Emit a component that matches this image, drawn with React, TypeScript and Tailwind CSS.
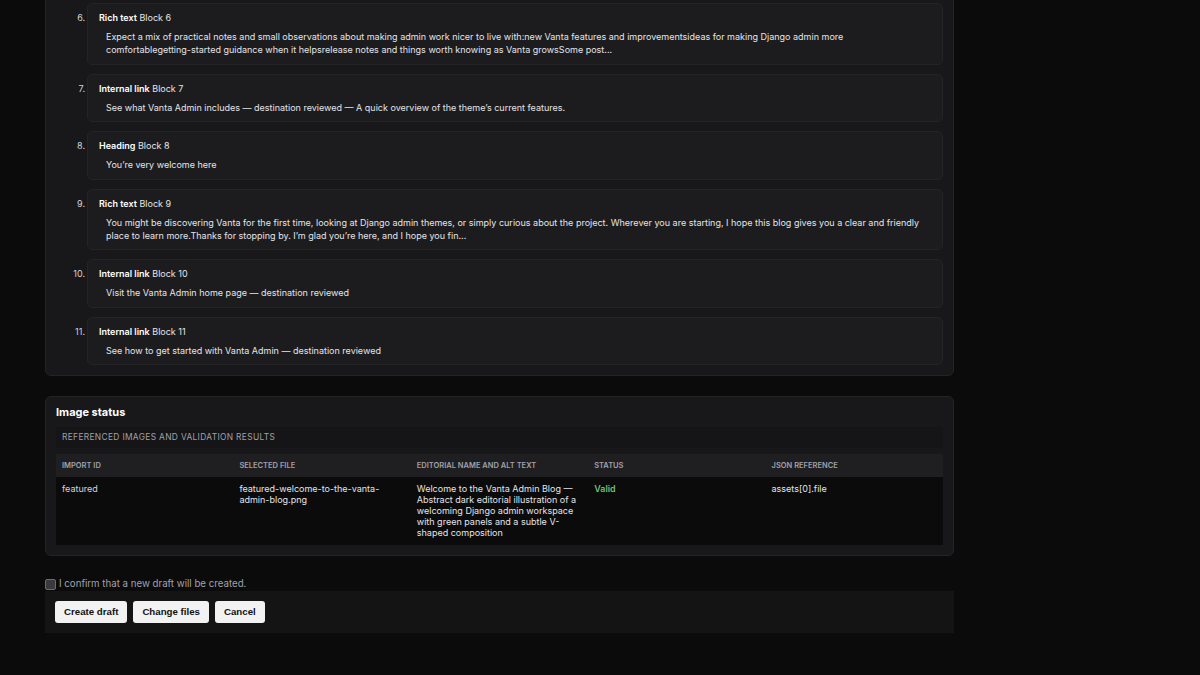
import { useState } from 'react'

type Block = { n: number; kind: string; text: string }

const BLOCKS: Block[] = [
  {
    n: 6,
    kind: 'Rich text',
    text: 'Expect a mix of practical notes and small observations about making admin work nicer to live with:new Vanta features and improvementsideas for making Django admin more comfortablegetting-started guidance when it helpsrelease notes and things worth knowing as Vanta growsSome post...',
  },
  {
    n: 7,
    kind: 'Internal link',
    text: 'See what Vanta Admin includes — destination reviewed — A quick overview of the theme’s current features.',
  },
  { n: 8, kind: 'Heading', text: 'You’re very welcome here' },
  {
    n: 9,
    kind: 'Rich text',
    text: 'You might be discovering Vanta for the first time, looking at Django admin themes, or simply curious about the project. Wherever you are starting, I hope this blog gives you a clear and friendly place to learn more.Thanks for stopping by. I’m glad you’re here, and I hope you fin...',
  },
  { n: 10, kind: 'Internal link', text: 'Visit the Vanta Admin home page — destination reviewed' },
  { n: 11, kind: 'Internal link', text: 'See how to get started with Vanta Admin — destination reviewed' },
]

const COLUMNS = ['Import ID', 'Selected file', 'Editorial name and alt text', 'Status', 'JSON reference']

export default function App() {
  const [confirmed, setConfirmed] = useState(false)

  return (
    <div className="min-h-[675px] bg-[#0b0b0b] font-['Inter',sans-serif] text-[#e4e4e7] overflow-hidden">
      <div className="w-[909px] ml-[45px]">
        {/* Block preview list */}
        <div className="mt-[-8px] rounded-[6px] border border-[#242427] bg-[#18181a] p-[10px]">
          <ol className="flex flex-col gap-[9px]">
            {BLOCKS.map((b) => (
              <li key={b.n} className="flex gap-[2px]">
                <span className="w-[29px] shrink-0 pt-[8px] text-right text-[9px] leading-[13px] text-[#d4d4d8]">
                  {b.n}.
                </span>
                <div className="flex-1 rounded-[5px] border border-[#242427] bg-[#1c1c1f] pl-[11px] pr-[12px] pt-[7px] pb-[7.5px]">
                  <div className="text-[9px] leading-[13px] text-[#e4e4e7]">
                    <span className="font-semibold text-white">{b.kind}</span> Block {b.n}
                  </div>
                  <p className="mt-[6px] max-w-[826px] pl-[7px] text-[9px] leading-[13px] text-[#e4e4e7]">{b.text}</p>
                </div>
              </li>
            ))}
          </ol>
        </div>

        {/* Image status */}
        <div className="mt-[20px] rounded-[6px] border border-[#242427] bg-[#18181a] px-[10px] pt-[8px] pb-[10px]">
          <h2 className="text-[11px] font-bold leading-[14px] text-white">Image status</h2>
          <div className="mt-[8px] bg-[#151517] px-[6px] py-[4px] text-[8.4px] uppercase leading-[13px] tracking-[0.04em] text-[#a1a1aa]">
            Referenced images and validation results
          </div>
          <table className="mt-[6px] w-full table-fixed border-collapse text-left">
            <thead>
              <tr className="bg-[#1f1f21]">
                {COLUMNS.map((c) => (
                  <th
                    key={c}
                    className="px-[6px] py-[5px] text-[7.5px] font-semibold uppercase leading-[13px] text-[#a1a1aa]"
                  >
                    {c}
                  </th>
                ))}
              </tr>
            </thead>
            <tbody>
              <tr className="bg-[#0b0b0b] align-top text-[9px] leading-[11px] text-[#e4e4e7]">
                <td className="px-[6px] pt-[6px] pb-[7px] text-[#d4d4d8]">featured</td>
                <td className="px-[6px] pt-[6px] pb-[7px]">featured-welcome-to-the-vanta-admin-blog.png</td>
                <td className="px-[6px] pt-[6px] pb-[7px]">
                  Welcome to the Vanta Admin Blog — Abstract dark editorial illustration of a welcoming Django admin
                  workspace with green panels and a subtle V-shaped composition
                </td>
                <td className="px-[6px] pt-[6px] pb-[7px] font-semibold text-[#6fbf73]">Valid</td>
                <td className="px-[6px] pt-[6px] pb-[7px]">assets[0].file</td>
              </tr>
            </tbody>
          </table>
        </div>

        {/* Confirmation + actions */}
        <label className="mt-[21px] flex items-center gap-[3px] text-[9.7px] leading-[14px] text-[#a1a1aa]">
          <input
            type="checkbox"
            checked={confirmed}
            onChange={(e) => setConfirmed(e.target.checked)}
            className="h-[11px] w-[11px] appearance-none rounded-[2px] border border-[#6b6b70] bg-[#3a3a3e] checked:bg-[#6fbf73]"
          />
          I confirm that a new draft will be created.
        </label>
        <div className="flex gap-[6px] bg-[#141414] p-[10px]">
          {['Create draft', 'Change files', 'Cancel'].map((label) => (
            <button
              key={label}
              type="button"
              className="h-[22px] rounded-[3px] bg-[#f2f2f2] px-[9px] text-[9.7px] font-bold text-[#111] font-['Liberation_Sans',Arial,sans-serif]"
            >
              {label}
            </button>
          ))}
        </div>
      </div>
    </div>
  )
}
